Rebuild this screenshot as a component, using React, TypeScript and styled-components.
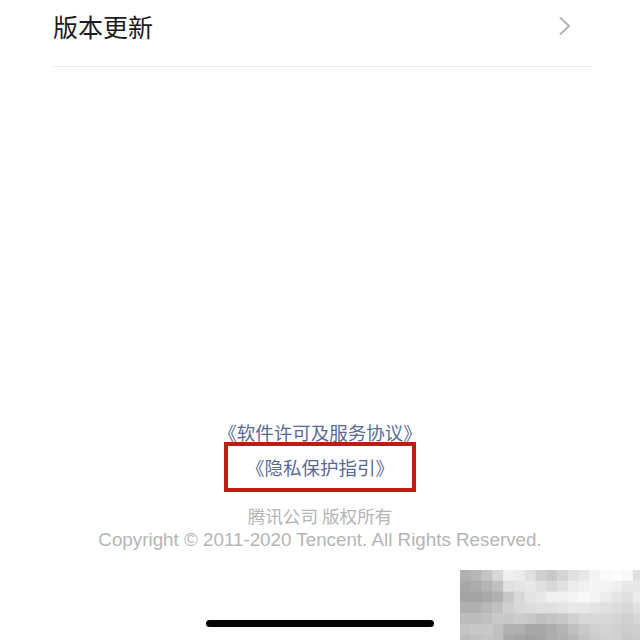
import styled, { createGlobalStyle } from "styled-components";

const GlobalStyle = createGlobalStyle`
  html, body {
    margin: 0;
    padding: 0;
    background: #ffffff;
  }
  body {
    font-family: "Noto Sans CJK SC", "Noto Sans", sans-serif;
  }
`;

const Page = styled.div`
  position: relative;
  width: 640px;
  height: 640px;
  overflow: hidden;
  display: flex;
  flex-direction: column;
  background: #ffffff;
`;

const SettingRow = styled.div`
  display: flex;
  align-items: center;
  justify-content: space-between;
  height: 52px;
  margin: 0 47px 0 53px;
`;

const RowTitle = styled.span`
  font-size: 25px;
  line-height: 1;
  color: #1b1b1b;
`;

const Chevron = styled.svg`
  width: 14px;
  height: 20px;
  margin-right: 21px;
`;

const Divider = styled.div`
  height: 1px;
  margin: 14px 47px 0 53px;
  background: #ededed;
`;

const Spacer = styled.div`
  flex: 1;
`;

const Footer = styled.div`
  display: flex;
  flex-direction: column;
  align-items: center;
`;

const LegalLink = styled.a`
  font-size: 18.5px;
  line-height: 24px;
  color: #586a94;
  text-decoration: none;
`;

const Highlight = styled.div`
  box-sizing: border-box;
  width: 192px;
  height: 50px;
  margin-top: -2px;
  border: 4px solid #bf1a14;
  display: flex;
  align-items: center;
  justify-content: center;
`;

const Notice = styled.div<{ $latin?: boolean }>`
  font-family: ${({ $latin }) =>
    $latin
      ? `"Liberation Sans", Arial, sans-serif`
      : `"Noto Sans CJK SC", sans-serif`};
  font-size: ${({ $latin }) => ($latin ? "18.8px" : "17.6px")};
  line-height: 24px;
  color: #b5b5b5;
  white-space: nowrap;
  margin-top: ${({ $latin }) => ($latin ? "0" : "12px")};
`;

const HomeIndicator = styled.div`
  width: 228px;
  height: 7px;
  border-radius: 4px;
  background: #060606;
  margin: 68px 0 13px;
`;

const Mosaic = styled.svg`
  position: absolute;
  left: 460px;
  top: 570px;
`;

// watermark pixels, grey levels row by row
const mosaicRows = [
  "b0 b8 c4 d8 f0 ec e0 d0 c8 d4 e0 e8 f4 fa fc f8 e0",
  "a8 ac b4 c0 e0 e4 e8 e0 d8 e0 ec f0 f4 f4 f0 e8 e8",
  "a4 a4 a8 b0 c8 d8 e4 e8 f0 f0 f4 f8 f4 ec e4 e0 ec",
  "b0 b0 b8 c0 d0 d8 dc e0 e0 e4 e8 e8 e4 e0 dc d8 e0",
  "bc bc c0 c8 c8 cc c8 c0 c4 c8 d0 d8 d8 d8 d4 d0 d8",
  "c4 c8 c8 c0 b0 b0 a8 a8 ac b4 c0 c8 d0 d4 d0 cc d0",
  "bc c0 c4 c0 a8 a4 a0 a4 ac b0 b8 c4 cc d0 d0 c8 cc",
].map((r) => r.split(" "));

const CELL = 10.8;

export default function App() {
  return (
    <>
      <GlobalStyle />
      <Page>
        <SettingRow>
          <RowTitle>版本更新</RowTitle>
          <Chevron viewBox="0 0 14 20">
            <path
              d="M2.5 2 L11 10 L2.5 18"
              fill="none"
              stroke="#b4b4b4"
              strokeWidth="2"
              strokeLinecap="round"
              strokeLinejoin="round"
            />
          </Chevron>
        </SettingRow>
        <Divider />
        <Spacer />
        <Footer>
          <LegalLink href="#">《软件许可及服务协议》</LegalLink>
          <Highlight>
            <LegalLink href="#">《隐私保护指引》</LegalLink>
          </Highlight>
          <Notice>腾讯公司 版权所有</Notice>
          <Notice $latin>Copyright © 2011-2020 Tencent. All Rights Reserved.</Notice>
          <HomeIndicator />
        </Footer>
        <Mosaic width="180" height="70" viewBox="0 0 180 70">
          {mosaicRows.map((row, y) =>
            row.map((g, x) => (
              <rect
                key={`${x}-${y}`}
                x={x * CELL}
                y={y * CELL}
                width={CELL + 0.5}
                height={CELL + 0.5}
                fill={`#${g}${g}${g}`}
              />
            ))
          )}
        </Mosaic>
      </Page>
    </>
  );
}
